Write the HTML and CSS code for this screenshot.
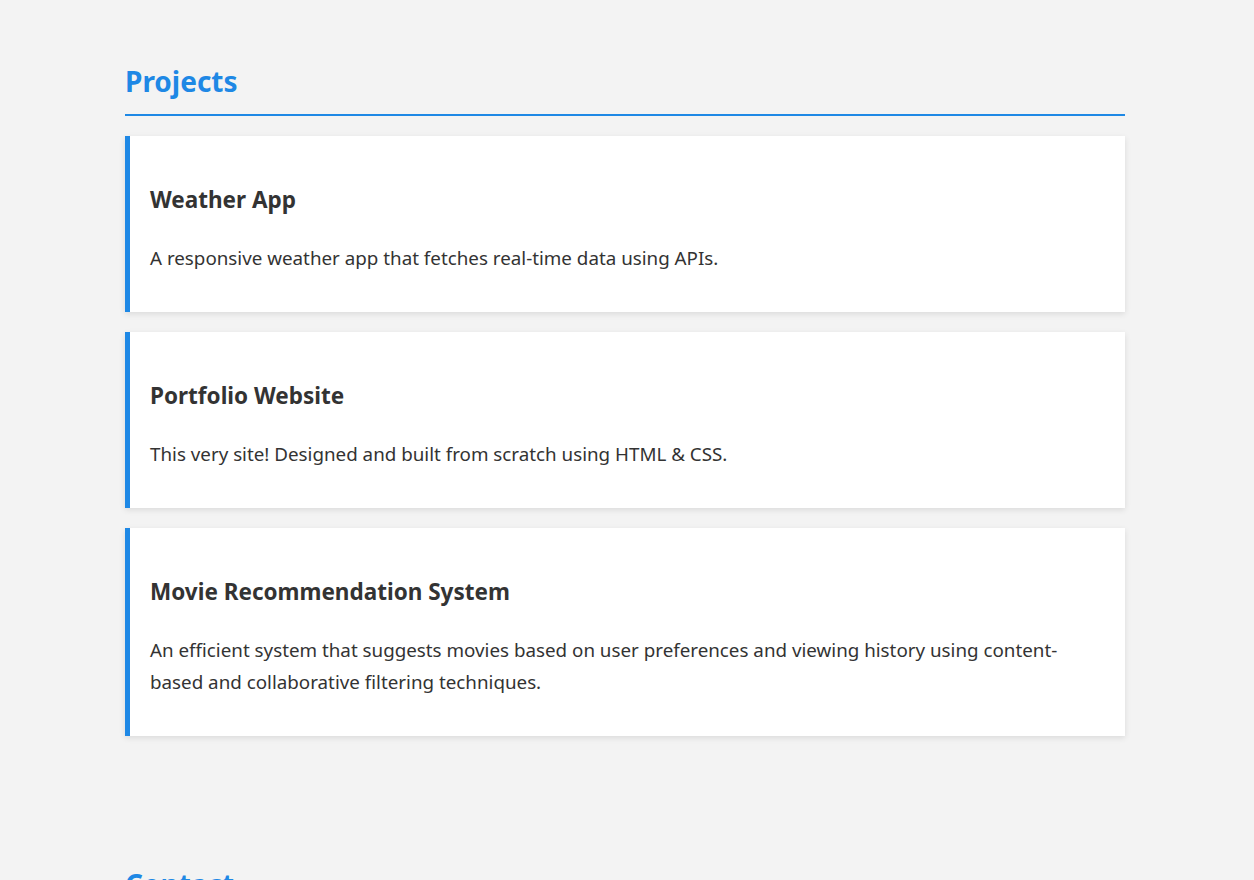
FILE: index.html
```html
<!DOCTYPE html>
<html lang="en">
<head>
<meta charset="utf-8">
<title>Projects</title>
<link rel="stylesheet" href="styles.css">
</head>
<body>
<main class="page">
  <section class="section projects">
    <h2 class="section-title">Projects</h2>
    <div class="card-list">
      <article class="card">
        <h3 class="card-title">Weather App</h3>
        <p class="card-text">A responsive weather app that fetches real-time data using APIs.</p>
      </article>
      <article class="card">
        <h3 class="card-title">Portfolio Website</h3>
        <p class="card-text">This very site! Designed and built from scratch using HTML &amp; CSS.</p>
      </article>
      <article class="card">
        <h3 class="card-title">Movie Recommendation System</h3>
        <p class="card-text">An efficient system that suggests movies based on user preferences and viewing history using content-based and collaborative filtering techniques.</p>
      </article>
    </div>
  </section>
  <section class="section contact">
    <h2 class="section-title">Contact</h2>
  </section>
</main>
</body>
</html>
```

FILE: styles.css
```css
html, body {
  margin: 0;
  padding: 0;
}
body {
  background: #f3f3f3;
  color: #333333;
  font-family: "Noto Sans", "Open Sans", sans-serif;
  font-size: 18px;
  line-height: 1.8;
}
.page {
  width: 1000px;
  margin-left: 125px;
}
.section {
  padding-top: 62px;
}
.contact {
  padding-top: 129px;
}
.section-title {
  margin: 0 0 20px;
  padding-bottom: 14px;
  border-bottom: 2px solid #1e88e5;
  color: #1e88e5;
  font-size: 28px;
  line-height: 38px;
  font-weight: 700;
}
.card-list {
  display: flex;
  flex-direction: column;
  gap: 20px;
}
.card {
  background: #ffffff;
  border-left: 5px solid #1e88e5;
  padding: 20px 20px;
  box-shadow: 0 2px 6px rgba(0, 0, 0, 0.1);
}
.card-title {
  margin: 24px 0 22px;
  font-size: 22.5px;
  line-height: 40px;
  font-weight: 700;
}
.card-text {
  margin: 0 0 18px;
  font-size: 18.8px;
  line-height: 32px;
}
```
